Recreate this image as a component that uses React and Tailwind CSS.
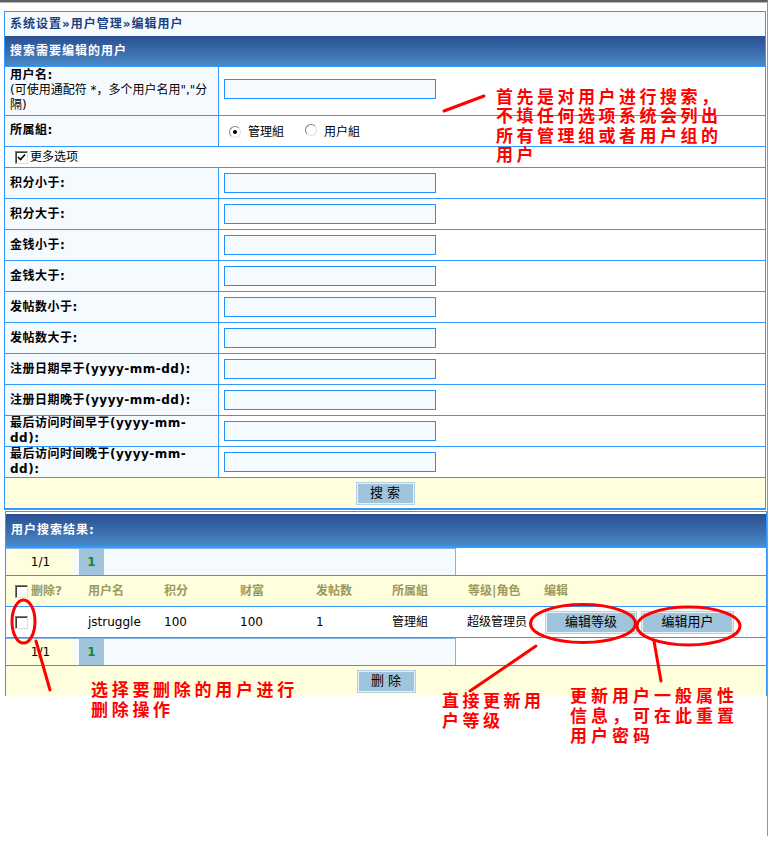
import React from 'react';

const filters = [
  ['积分小于:'],
  ['积分大于:'],
  ['金钱小于:'],
  ['金钱大于:'],
  ['发帖数小于:'],
  ['发帖数大于:'],
  ['注册日期早于(yyyy-mm-dd):'],
  ['注册日期晚于(yyyy-mm-dd):'],
  ['最后访问时间早于(yyyy-mm-', 'dd):'],
  ['最后访问时间晚于(yyyy-mm-', 'dd):'],
];

const columns = ['用户名', '积分', '财富', '发帖数', '所属組', '等级|角色'];

// classic sunken checkbox
const CheckBox = ({ checked }) => (
  <span className="inline-flex w-[13px] h-[13px] items-center justify-center border border-t-[#7b7b7b] border-l-[#7b7b7b] border-b-[#dcdcdc] border-r-[#dcdcdc] bg-white shadow-[inset_1px_1px_0_#3c3c3c]">
    {checked && (
      <svg width="9" height="9" viewBox="0 0 9 9">
        <path d="M1 4 L3.5 6.5 L8 1.5" fill="none" stroke="#000" strokeWidth="1.6" />
      </svg>
    )}
  </span>
);

const Radio = ({ checked }) => (
  <span className="inline-flex w-[12px] h-[12px] items-center justify-center rounded-full border border-t-[#808080] border-l-[#808080] border-b-[#e0e0e0] border-r-[#e0e0e0] bg-white">
    {checked && <span className="w-[4px] h-[4px] rounded-full bg-black" />}
  </span>
);

const Button = ({ children, className = '' }) => (
  <button className={`h-[23px] border border-[#b4d0e4] bg-[#a0c4dc] shadow-[inset_0_0_0_1px_#e6f0f7] text-[13px] text-black ${className}`}>
    {children}
  </button>
);

const Input = () => (
  <input className="w-[212px] h-[20px] border border-[#1e90ff] bg-[#f5faff] outline-none" />
);

const Pager = () => (
  <div className="flex h-[28px] border-b border-[#3399ff]">
    <div className="flex w-[450px] h-full border-t border-r border-[#86b6e6] bg-[#f5faff]">
      <div className="w-[67px] ml-px flex items-center justify-center bg-[#ffffdd]">1/1</div>
      <div className="w-[25px] ml-[5px] flex items-center justify-center bg-[#a0c4dc] font-bold text-[#138a2e]">1</div>
    </div>
  </div>
);

const noteText = "absolute font-bold text-[#ff0000] font-['Noto_Sans_CJK_SC',sans-serif]";

export default function App() {
  return (
    <div className="relative w-[777px] h-[842px] bg-white overflow-hidden text-[12px] text-black font-['DejaVu_Sans','Noto_Sans_CJK_SC',sans-serif]">
      <div className="w-[768px] h-[836px] border-t-2 border-t-[#5e5e5e] border-r border-r-[#5ca3ee]">
        <div className="h-px bg-[#b4b4b4]" />

        {/* search form */}
        <div className="ml-[4px] mt-[8px] w-[762px] border-x border-t border-b-2 border-[#3399ff]">
          <div className="h-[24px] flex items-center pl-[5px] bg-[#f5faff] font-bold text-[#1b3f80] tracking-[1px]">
            系统设置»用户管理»编辑用户
          </div>
          <div className="h-[31px] flex items-center pl-[5px] border-b border-[#3399ff] bg-linear-to-b from-[#2a4f92] to-[#4a89c7] font-bold text-white tracking-[1px]">
            搜索需要编辑的用户
          </div>

          <div className="flex h-[49px] border-b border-[#3399ff]">
            <div className="w-[214px] border-r border-[#3399ff] bg-[#f5faff] pl-[5px] pt-[1px] leading-[15px]">
              <div className="font-bold tracking-[0.5px]">用户名:</div>
              <div>(可使用通配符 *，多个用户名用","分<br />隔)</div>
            </div>
            <div className="flex-1 flex items-center pl-[5px] pb-[4px]">
              <Input />
            </div>
          </div>

          <div className="flex h-[31px] border-b border-[#3399ff]">
            <div className="w-[214px] border-r border-[#3399ff] bg-[#f5faff] pl-[5px] flex items-center pb-[3px] font-bold tracking-[0.5px]">
              所属組:
            </div>
            <div className="flex-1 flex items-center pl-[10px] pt-[1px]">
              <Radio checked />
              <span className="ml-[7px]">管理組</span>
              <span className="ml-[21px]"><Radio /></span>
              <span className="ml-[7px]">用户組</span>
            </div>
          </div>

          <div className="flex items-center h-[21px] pl-[10px] border-b border-[#3399ff]">
            <CheckBox checked />
            <span className="ml-[2px]">更多选项</span>
          </div>

          {filters.map((label, i) => (
            <div key={i} className="flex h-[31px] border-b border-[#3399ff]">
              <div className="w-[214px] border-r border-[#3399ff] bg-[#f5faff] pl-[5px] flex flex-col justify-center font-bold leading-[15px] tracking-[0.5px]">
                {label.map((line) => (
                  <div key={line}>{line}</div>
                ))}
              </div>
              <div className="flex-1 flex items-center pl-[5px]">
                <Input />
              </div>
            </div>
          ))}

          <div className="h-[30px] flex items-center justify-center bg-[#ffffdd]">
            <Button className="w-[59px] tracking-[4px] pl-[4px]">搜索</Button>
          </div>
        </div>

        {/* search results */}
        <div className="ml-[5px] mt-[1px] w-[762px] border-x border-t border-[#3399ff]">
          <div className="h-[36px] flex items-center pl-[5px] border-t-2 border-white border-b-2 border-b-[#3399ff] bg-linear-to-b from-[#2a4f92] to-[#4a89c7] font-bold text-white tracking-[1px]">
            用户搜索结果:
          </div>

          <Pager />

          <div className="grid grid-cols-[77px_76px_76px_76px_76px_76px_76px_1fr] h-[31px] items-center border-b border-[#3399ff] bg-[#ffffdd] font-bold text-[#9a9a5c]">
            <div className="flex items-center pl-[9px]">
              <CheckBox />
              <span className="ml-[3px]">删除?</span>
            </div>
            {columns.map((c) => (
              <div key={c} className="pl-[5px]">{c}</div>
            ))}
            <div className="pl-[5px]">编辑</div>
          </div>

          <div className="grid grid-cols-[77px_76px_76px_76px_76px_76px_76px_1fr] h-[31px] items-center border-b border-[#3399ff]">
            <div className="flex items-center pl-[9px]">
              <CheckBox />
            </div>
            <div className="pl-[5px]">jstruggle</div>
            <div className="pl-[5px]">100</div>
            <div className="pl-[5px]">100</div>
            <div className="pl-[5px]">1</div>
            <div className="pl-[5px]">管理組</div>
            <div className="pl-[4px]">超级管理员</div>
            <div className="flex gap-[4px] pl-[6px]">
              <Button className="w-[92px]">编辑等级</Button>
              <Button className="w-[93px]">编辑用户</Button>
            </div>
          </div>

          <Pager />

          <div className="h-[30px] flex items-center justify-center bg-[#ffffdd]">
            <Button className="w-[59px] tracking-[4px] pl-[4px]">删除</Button>
          </div>
        </div>
      </div>

      {/* red notes drawn over the page */}
      <svg className="absolute inset-0 pointer-events-none" width="777" height="842" viewBox="0 0 777 842">
        <g fill="none" stroke="#ff0000" strokeWidth="3" strokeLinecap="round">
          <line x1="444" y1="111" x2="484" y2="96" />
          <ellipse cx="23.5" cy="621.5" rx="11.5" ry="21.5" />
          <line x1="36" y1="641" x2="50" y2="690" />
          <ellipse cx="583" cy="623.5" rx="52.5" ry="19" />
          <ellipse cx="688.5" cy="626" rx="51.5" ry="19" />
          <line x1="536" y1="646" x2="470" y2="691" />
          <line x1="654" y1="641" x2="661" y2="681" />
        </g>
      </svg>

      <div className={`${noteText} left-[496px] top-[86px] text-[17px] leading-[19.3px] tracking-[3.5px]`}>
        <div>首先是对用户进行搜索，</div>
        <div>不填任何选项系统会列出</div>
        <div>所有管理组或者用户组的</div>
        <div>用户</div>
      </div>
      <div className={`${noteText} left-[91px] top-[679px] text-[17px] leading-[20px] tracking-[3.7px]`}>
        <div>选择要删除的用户进行</div>
        <div>删除操作</div>
      </div>
      <div className={`${noteText} left-[442px] top-[690px] text-[17px] leading-[20px] tracking-[3.5px]`}>
        <div>直接更新用</div>
        <div>户等级</div>
      </div>
      <div className={`${noteText} left-[570px] top-[685px] text-[17px] leading-[20px] tracking-[4px]`}>
        <div>更新用户一般属性</div>
        <div>信息，可在此重置</div>
        <div>用户密码</div>
      </div>
    </div>
  );
}
